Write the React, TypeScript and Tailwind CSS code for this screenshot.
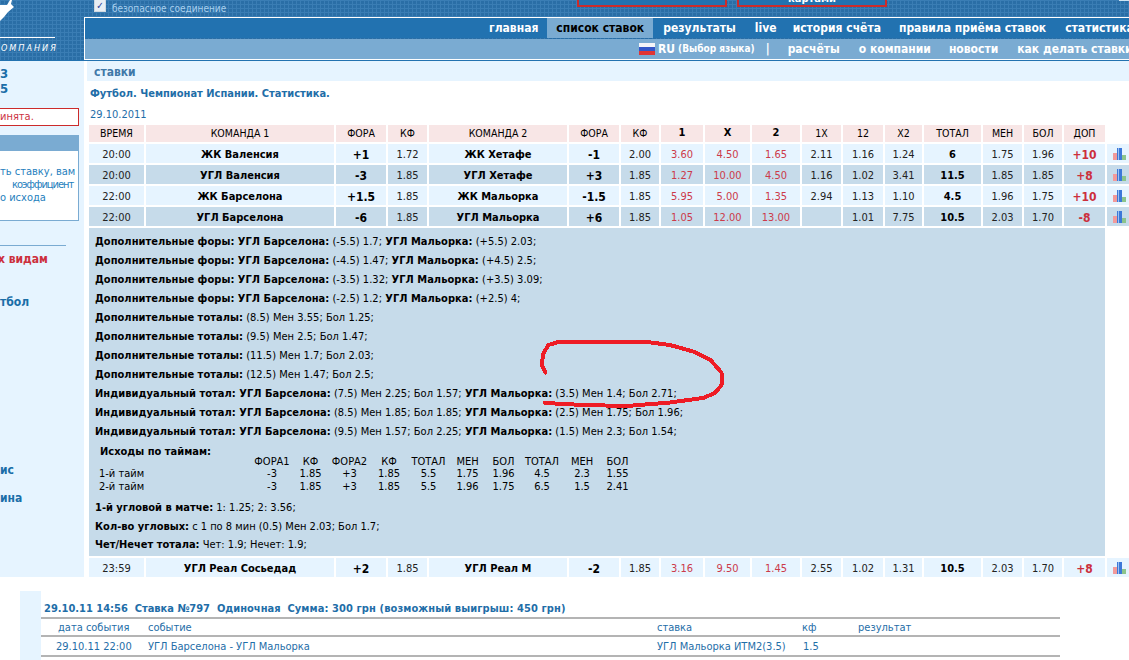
import { FC, ReactNode } from "react";

const gridCols =
  "grid grid-cols-[55px_188px_50px_39px_138px_50px_38px_42px_45px_48px_39px_40px_37px_57px_39px_38px_41px_22px] gap-x-[2px]";

const headCols = ["ВРЕМЯ", "КОМАНДА 1", "ФОРА", "КФ", "КОМАНДА 2", "ФОРА", "КФ", "1", "X", "2", "1X", "12", "X2", "ТОТАЛ", "МЕН", "БОЛ", "ДОП"];

type Match = { time: string; t1: string; f1: string; k1: string; t2: string; f2: string; k2: string; odds: string[]; dc: string[]; total: string; men: string; bol: string; dop: string };

const matches: Match[] = [
  { time: "20:00", t1: "ЖК Валенсия", f1: "+1", k1: "1.72", t2: "ЖК Хетафе", f2: "-1", k2: "2.00", odds: ["3.60", "4.50", "1.65"], dc: ["2.11", "1.16", "1.24"], total: "6", men: "1.75", bol: "1.96", dop: "+10" },
  { time: "20:00", t1: "УГЛ Валенсия", f1: "-3", k1: "1.85", t2: "УГЛ Хетафе", f2: "+3", k2: "1.85", odds: ["1.27", "10.00", "4.50"], dc: ["1.16", "1.02", "3.41"], total: "11.5", men: "1.85", bol: "1.85", dop: "+8" },
  { time: "22:00", t1: "ЖК Барселона", f1: "+1.5", k1: "1.85", t2: "ЖК Мальорка", f2: "-1.5", k2: "1.85", odds: ["5.95", "5.00", "1.35"], dc: ["2.94", "1.13", "1.10"], total: "4.5", men: "1.96", bol: "1.75", dop: "+10" },
  { time: "22:00", t1: "УГЛ Барселона", f1: "-6", k1: "1.85", t2: "УГЛ Мальорка", f2: "+6", k2: "1.85", odds: ["1.05", "12.00", "13.00"], dc: ["", "1.01", "7.75"], total: "10.5", men: "2.03", bol: "1.70", dop: "-8" },
];

const lastMatch: Match = { time: "23:59", t1: "УГЛ Реал Сосьедад", f1: "+2", k1: "1.85", t2: "УГЛ Реал М", f2: "-2", k2: "1.85", odds: ["3.16", "9.50", "1.45"], dc: ["2.55", "1.02", "1.31"], total: "10.5", men: "2.03", bol: "1.70", dop: "+8" };

const ChartIcon: FC = () => (
  <svg width="13" height="12" viewBox="0 0 13 12" className="ml-[2px]">
    <rect x="0" y="5" width="4" height="7" fill="#f29a9a" />
    <rect x="4" y="0" width="5" height="12" fill="#3c78d8" />
    <rect x="5" y="0" width="1" height="12" fill="#9cc0f0" />
    <rect x="9" y="7" width="4" height="5" fill="#8cc48c" />
  </svg>
);

const Cell: FC<{ bg: string; className?: string; children?: ReactNode }> = ({ bg, className, children }) => (
  <div className={`${bg} flex items-center justify-center h-[19px] pt-[3px] ${className ?? ""}`}>{children}</div>
);

const MatchRow: FC<{ m: Match; bg: string; className?: string }> = ({ m, bg, className }) => (
  <div className={`${gridCols} text-[11px] text-[#222] ${className ?? ""}`}>
    <Cell bg={bg}>{m.time}</Cell>
    <Cell bg={bg} className="font-bold text-black">{m.t1}</Cell>
    <Cell bg={bg} className="font-bold text-black text-[12px]">{m.f1}</Cell>
    <Cell bg={bg}>{m.k1}</Cell>
    <Cell bg={bg} className="font-bold text-black">{m.t2}</Cell>
    <Cell bg={bg} className="font-bold text-black text-[12px]">{m.f2}</Cell>
    <Cell bg={bg}>{m.k2}</Cell>
    {m.odds.map((o, i) => (
      <Cell key={i} bg={bg} className="text-[#cc3a4a]">{o}</Cell>
    ))}
    {m.dc.map((o, i) => (
      <Cell key={i} bg={bg}>{o}</Cell>
    ))}
    <Cell bg={bg} className="font-bold text-black">{m.total}</Cell>
    <Cell bg={bg}>{m.men}</Cell>
    <Cell bg={bg}>{m.bol}</Cell>
    <Cell bg={bg} className="font-bold text-[#cc2f3c] text-[12px]">{m.dop}</Cell>
    <Cell bg={bg} className="!pt-0"><ChartIcon /></Cell>
  </div>
);

const extras: [string, string, string, string][] = [
  ["Дополнительные форы: УГЛ Барселона:", "(-5.5) 1.7;", "УГЛ Мальорка:", "(+5.5) 2.03;"],
  ["Дополнительные форы: УГЛ Барселона:", "(-4.5) 1.47;", "УГЛ Мальорка:", "(+4.5) 2.5;"],
  ["Дополнительные форы: УГЛ Барселона:", "(-3.5) 1.32;", "УГЛ Мальорка:", "(+3.5) 3.09;"],
  ["Дополнительные форы: УГЛ Барселона:", "(-2.5) 1.2;", "УГЛ Мальорка:", "(+2.5) 4;"],
  ["Дополнительные тоталы:", "(8.5) Мен 3.55; Бол 1.25;", "", ""],
  ["Дополнительные тоталы:", "(9.5) Мен 2.5; Бол 1.47;", "", ""],
  ["Дополнительные тоталы:", "(11.5) Мен 1.7; Бол 2.03;", "", ""],
  ["Дополнительные тоталы:", "(12.5) Мен 1.47; Бол 2.5;", "", ""],
  ["Индивидуальный тотал: УГЛ Барселона:", "(7.5) Мен 2.25; Бол 1.57;", "УГЛ Мальорка:", "(3.5) Мен 1.4; Бол 2.71;"],
  ["Индивидуальный тотал: УГЛ Барселона:", "(8.5) Мен 1.85; Бол 1.85;", "УГЛ Мальорка:", "(2.5) Мен 1.75; Бол 1.96;"],
  ["Индивидуальный тотал: УГЛ Барселона:", "(9.5) Мен 1.57; Бол 2.25;", "УГЛ Мальорка:", "(1.5) Мен 2.3; Бол 1.54;"],
];

const halfCols = "grid grid-cols-[157px_40px_37px_41px_38px_41px_37px_35px_42px_38px_33px] text-center leading-[13px]";
const halves = [
  ["1-й тайм", "-3", "1.85", "+3", "1.85", "5.5", "1.75", "1.96", "4.5", "2.3", "1.55"],
  ["2-й тайм", "-3", "1.85", "+3", "1.85", "5.5", "1.96", "1.75", "6.5", "1.5", "2.41"],
];

const App: FC = () => {
  return (
    <div className="relative w-[1129px] h-[660px] overflow-hidden bg-white font-['DejaVu_Sans_Condensed','DejaVu_Sans',sans-serif] text-[11px]">
      {/* шапка */}
      <div className="flex h-[60px] bg-[#2a6ea6] bg-[linear-gradient(#3a7db4_1px,transparent_1px),linear-gradient(90deg,#3a7db4_1px,transparent_1px)] bg-[size:4px_4px]">
        <div className="w-[84px] shrink-0 relative">
          <svg width="16" height="22" viewBox="0 0 16 22" className="absolute left-0 top-0">
            <polygon points="0,5 7,5 10,0 12,0 11,4 14,7 8,12 4,17 0,21" fill="#fff" />
          </svg>
          <div className="w-[55px] h-px bg-white mt-[37px]" />
          <div className="pl-px pt-[5px] text-[9px] leading-[11px] italic text-white tracking-[2px]">ОМПАНИЯ</div>
        </div>
        <div className="flex-1 min-w-0">
          <div className="flex h-[17px] relative">
            <span className="mt-[-1px] ml-[10px] w-[12px] h-[13px] border border-[#cfd8e0] bg-[#e8eef4] text-[#2a3f9a] text-[10px] leading-[11px] text-center font-bold">✓</span>
            <span className="ml-[6px] text-[10px] leading-[18px] text-[#a9d0ee]">безопасное соединение</span>
            <div className="absolute left-[493px] -top-[10px] w-[150px] h-[17px] border-2 border-[#cc2b2b] bg-[#2272b0]" />
            <div className="absolute left-[653px] -top-[10px] w-[150px] h-[17px] border-2 border-[#cc2b2b] bg-[#2272b0] flex justify-center">
              <span className="font-bold text-white text-[11px] leading-[14px]">картами</span>
            </div>
            <div className="absolute right-0 top-0 w-[10px] h-px bg-[#cfe3f2]" />
          </div>
          <div className="border-y border-l border-white">
            <div className="h-[20px] bg-[#2272b0] flex overflow-hidden whitespace-nowrap text-white font-bold text-[12px] leading-[21px]">
              <div className="flex shrink-0 ml-[395px]">
                <span className="px-[9px]">главная</span>
                <span className="px-[9px] bg-[#7aabd2] text-black">список ставок</span>
                <span className="px-[9px] ml-px">результаты</span>
                <span className="px-[9px] ml-px">live</span>
                <span className="px-[9px] -ml-[2px]">история счёта</span>
                <span className="px-[9px]">правила приёма ставок</span>
                <span className="px-[9px] ml-px">статистика</span>
              </div>
            </div>
            <div className="h-[20px] mt-px bg-[#7aabd2] flex overflow-hidden whitespace-nowrap text-white font-bold text-[12px] leading-[22px]">
              <div className="flex shrink-0 ml-[554px] items-center">
                <svg width="16" height="12" viewBox="0 0 16 12" className="shrink-0 mr-[3px]">
                  <rect width="16" height="4" fill="#f4f4f8" />
                  <rect y="4" width="16" height="4" fill="#3457c8" />
                  <rect y="8" width="16" height="4" fill="#e03434" />
                </svg>
                <span>RU</span>
                <span className="ml-[3px] font-bold text-[10px]">(Выбор языка)</span>
                <span className="ml-[11px] mr-[9px]">|</span>
                <span className="px-[9px]">расчёты</span>
                <span className="px-[9px] ml-px">о компании</span>
                <span className="px-[9px]">новости</span>
                <span className="px-[9px] ml-px">как делать ставки</span>
              </div>
            </div>
          </div>
        </div>
      </div>
      <div className="h-px bg-[#2272b0]" />

      {/* основная часть */}
      <div className="flex h-[516px]">
        <aside className="w-[84px] shrink-0 bg-[#e6f4ff] overflow-hidden text-[#1a6ea8]">
          <div className="font-bold text-[13px] leading-[15px] mt-[5px]">3</div>
          <div className="font-bold text-[13px] leading-[15px]">5</div>
          <div className="mt-[12px] h-[18px] w-[79px] bg-white border border-l-0 border-[#cc2b2b] text-[#cc3344] leading-[16px]">инята.</div>
          <div className="mt-[9px] w-[79px] h-[86px] border-r border-b border-[#7aabd2] bg-white">
            <div className="h-[16px] bg-[#7aabd2]" />
            <div className="mt-[14px] leading-[13px] text-[#1f80bd] whitespace-nowrap">
              <div>ть ставку, вам</div>
              <div className="pl-[12px] tracking-[-1px]">коэффициент</div>
              <div>о исхода</div>
            </div>
          </div>
          <div className="mt-[24px] w-[66px] h-px bg-[#7aabd2]" />
          <div className="mt-[6px] -ml-[2px] font-bold text-[12px] leading-[14px] text-[#cc2f3c]">х видам</div>
          <div className="mt-[29px] font-bold text-[12px] leading-[14px]">тбол</div>
          <div className="mt-[154px] font-bold text-[12px] leading-[14px]">ис</div>
          <div className="mt-[14px] font-bold text-[12px] leading-[14px]">ина</div>
        </aside>

        <main className="flex-1 min-w-0 pl-[3px]">
          <div className="h-[20px] bg-[#e6f4ff] pl-[7px] font-bold text-[12px] leading-[22px] text-[#3f78a8]">ставки</div>
          <div className="ml-[3px] mt-[6px] font-bold text-[#1f6ea8] leading-[14px]">Футбол. Чемпионат Испании. Статистика.</div>
          <div className="ml-[3px] mt-[7px] text-[#1f6ea8] leading-[14px]">29.10.2011</div>
          <div className="ml-[2px] mt-[3px] text-[10.5px] text-black">
            <div className={gridCols}>
              {headCols.map((h, i) => (
                <div key={i} className={`bg-[#f8e6e6] flex items-center justify-center h-[17px] ${i >= 7 && i <= 9 ? "font-bold text-[11px]" : ""}`}>{h}</div>
              ))}
            </div>
            <div className="mt-[2px] flex flex-col gap-y-[2px]">
              {matches.map((m, i) => (
                <MatchRow key={i} m={m} bg={i % 2 === 0 ? "bg-[#e6f4ff]" : "bg-[#c6dbea]"} />
              ))}
            </div>
            <div className="mt-[2px] w-[1016px] h-[328px] bg-[#c6dbea] pl-[6px] pt-[4px] text-[11px] text-black">
              {extras.map((e, i) => (
                <div key={i} className="h-[19px] leading-[19px] whitespace-nowrap tracking-[0.03px]">
                  <b>{e[0]}</b> {e[1]} {e[2] && <b>{e[2]}</b>} {e[3]}
                </div>
              ))}
              <div className="pl-[5px] mt-[4px] leading-[13px] font-bold">Исходы по таймам:</div>
              <div className="-mt-[3px]">
                <div className={`${halfCols} h-[12px]`}>
                  {["", "ФОРА1", "КФ", "ФОРА2", "КФ", "ТОТАЛ", "МЕН", "БОЛ", "ТОТАЛ", "МЕН", "БОЛ"].map((h, i) => (
                    <div key={i}>{h}</div>
                  ))}
                </div>
                {halves.map((r, i) => (
                  <div key={i} className={halfCols}>
                    {r.map((c, j) => (
                      <div key={j} className={j === 0 ? "text-left pl-[4px]" : ""}>{c}</div>
                    ))}
                  </div>
                ))}
              </div>
              <div className="mt-[5px] h-[19px] leading-[19px]"><b>1-й угловой в матче:</b> 1: 1.25; 2: 3.56;</div>
              <div className="h-[19px] leading-[19px]"><b>Кол-во угловых:</b> с 1 по 8 мин (0.5) Мен 2.03; Бол 1.7;</div>
              <div className="h-[18px] leading-[18px]"><b>Чет/Нечет тотала:</b> Чет: 1.9; Нечет: 1.9;</div>
            </div>
            <MatchRow m={lastMatch} bg="bg-[#e6f4ff]" className="mt-[2px]" />
          </div>
        </main>
      </div>

      {/* ставка */}
      <div className="flex mt-[14px] h-[69px]">
        <div className="ml-[20px] w-[21px] shrink-0 bg-[#e6f4ff]" />
        <div className="w-[1019px] text-[#1f6ea8]">
          <div className="h-[26px] pl-[3px] pt-[10px] font-bold leading-[16px]">
            29.10.11 14:56 &nbsp;Ставка №797 &nbsp;Одиночная &nbsp;<span className="tracking-[0.1px]">Сумма: 300 грн (возможный выигрыш: 450 грн)</span>
          </div>
          <div className="grid grid-cols-[107px_509px_145px_56px_1fr] border-y-2 border-[#b4b4b4] h-[20px] leading-[17px]">
            <div className="pl-[17px]">дата события</div>
            <div>событие</div>
            <div>ставка</div>
            <div>кф</div>
            <div>результат</div>
          </div>
          <div className="grid grid-cols-[107px_509px_145px_56px_1fr] border-b-2 border-[#b4b4b4] h-[20px] leading-[20px]">
            <div className="pl-[15px]">29.10.11 22:00</div>
            <div>УГЛ Барселона - УГЛ Мальорка</div>
            <div>УГЛ Мальорка ИТМ2(3.5)</div>
            <div className="pl-px">1.5</div>
            <div />
          </div>
        </div>
      </div>

      {/* красная пометка от руки */}
      <svg className="absolute left-0 top-0 pointer-events-none" width="1129" height="660" viewBox="0 0 1129 660" shapeRendering="crispEdges">
        <path
          d="M545.5 372.5 L541.5 365 L543.5 353 L548.5 345 L560 341.5 L643 341.5 L670 345 L693 351.5 L710 359.5 L721.5 372.5 L721.5 385 L715 393 L703 398 L670 402.5 L627 406 L583 405 L545 403"
          fill="none"
          stroke="#ee1c25"
          strokeWidth="4"
          strokeLinejoin="round"
          strokeLinecap="round"
        />
      </svg>
    </div>
  );
};

export default App;
